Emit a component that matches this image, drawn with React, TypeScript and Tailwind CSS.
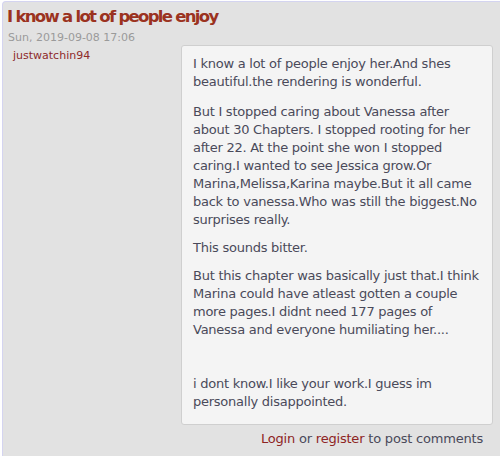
export default function App() {
  return (
    <div className="h-[456px] w-[500px] overflow-hidden bg-white pl-[2px] pt-[1px] font-['DejaVu_Sans',Verdana,sans-serif]">
      <div className="h-[600px] w-[600px] rounded-tl-[4px] border-l border-t border-[#d4d4f0] bg-[#e2e2e2]">
        <h2 className="pl-[4px] pt-[4px] font-['DejaVu_Sans',sans-serif] text-[16.5px] font-bold leading-[22px] tracking-[-1.7px] text-[#9b3220]">
          I know a lot of people enjoy
        </h2>
        <div className="pl-[5px] pt-[3px] text-[11px] leading-[14px] text-[#9a9a9a]">
          Sun, 2019-09-08 17:06
        </div>
        <div className="flex w-[491px]">
          <div className="w-[178px] shrink-0 pl-[10px] pt-[4px] text-[11px] leading-[14px] text-[#8e2a2a]">
            justwatchin94
          </div>
          <div className="w-[312px]">
            <div className="h-[380px] rounded-[3px] border border-[#cfcfcf] bg-[#f4f4f4] pl-[11px] pr-[5px] pt-[9px] text-[13px] leading-[18px] tracking-[-0.25px] text-[#4a4a5a]">
              <p>I know a lot of people enjoy her.And shes beautiful.the rendering is wonderful.</p>
              <p className="mt-[12px]">
                But I stopped caring about Vanessa after about 30 Chapters. I stopped rooting for her after 22. At the point she won I stopped caring.I wanted to see Jessica grow.Or Marina,Melissa,Karina maybe.But it all came back to vanessa.Who was still the biggest.No surprises really.
              </p>
              <p className="mt-[10px]">This sounds bitter.</p>
              <p className="mt-[10px]">
                But this chapter was basically just that.I think Marina could have atleast gotten a couple more pages.I didnt need 177 pages of Vanessa and everyone humiliating her....
              </p>
              <p className="mt-[36px]">i dont know.I like your work.I guess im personally disappointed.</p>
            </div>
            <div className="pr-[10px] pt-[5px] text-right text-[13px] leading-[18px] tracking-[-0.2px] text-[#4a4a5a]">
              <a className="text-[#8e2424]">Login</a> or <a className="text-[#8e2424]">register</a> to post comments
            </div>
          </div>
        </div>
      </div>
    </div>
  );
}
